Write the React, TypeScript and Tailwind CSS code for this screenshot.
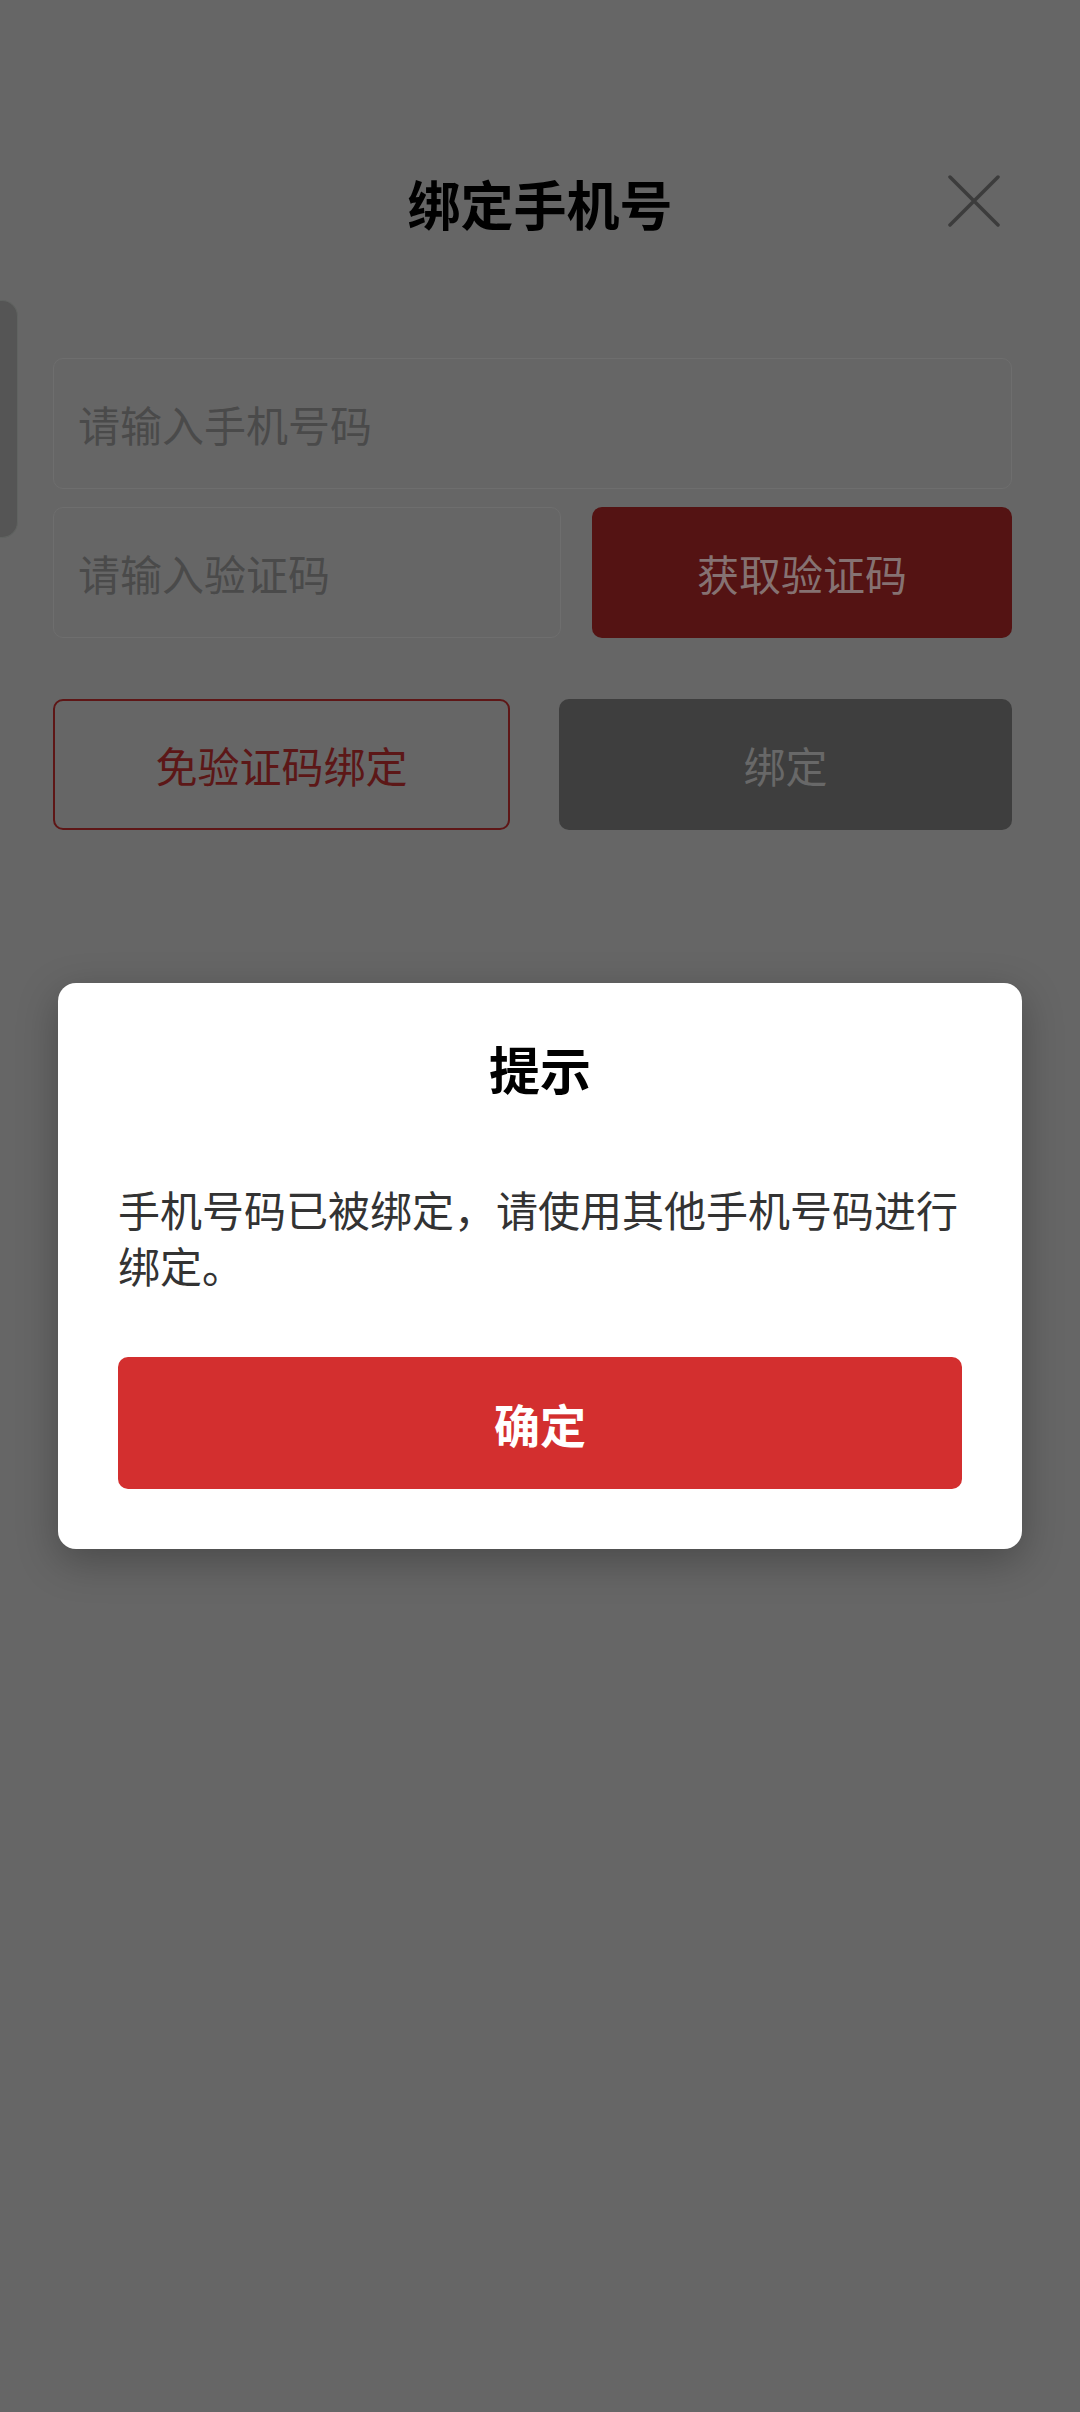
import React from "react";

const font = "font-['Noto_Sans_CJK_SC','Noto_Sans',sans-serif]";

function CloseIcon() {
  return (
    <svg viewBox="0 0 52 52" className="h-[52px] w-[52px]" fill="none">
      <path d="M2 2 L50 50 M50 2 L2 50" stroke="#3c3c3c" strokeWidth="3.5" strokeLinecap="round" />
    </svg>
  );
}

export default function App() {
  return (
    <div className={`relative min-h-[2412px] w-full overflow-hidden bg-[#666666] ${font}`}>
      {/* side tab peeking from the left edge */}
      <div className="absolute left-0 top-[300px] h-[238px] w-[18px] rounded-r-[16px] border border-l-0 border-[#606361] bg-[#555555]" />

      {/* header */}
      <div className="pt-[138px]">
        <div className="relative flex h-[130px] items-center justify-center">
          <h1 className="text-[53px] font-bold leading-none text-black">绑定手机号</h1>
          <button className="absolute right-[80px] top-[37px]">
            <CloseIcon />
          </button>
        </div>
      </div>

      {/* form */}
      <div className="mt-[90px] flex flex-col pl-[53px] pr-[68px]">
        <div className="flex h-[131px] items-center rounded-[10px] border border-[#6e6e6e] px-[24px] text-[42px] text-[#4a4a4a]">
          请输入手机号码
        </div>
        <div className="mt-[18px] flex gap-[31px]">
          <div className="flex h-[131px] flex-1 items-center rounded-[10px] border border-[#6e6e6e] px-[24px] text-[42px] text-[#4a4a4a]">
            请输入验证码
          </div>
          <div className="flex h-[131px] w-[420px] items-center justify-center rounded-[10px] bg-[#541313] text-[42px] text-[#857272]">
            获取验证码
          </div>
        </div>
        <div className="mt-[61px] flex gap-[49px]">
          <div className="flex h-[131px] flex-1 items-center justify-center rounded-[10px] border-2 border-[#5e1616] text-[42px] text-[#5c1717]">
            免验证码绑定
          </div>
          <div className="flex h-[131px] flex-1 items-center justify-center rounded-[10px] bg-[#3e3e3e] text-[42px] text-[#686868]">
            绑定
          </div>
        </div>
      </div>

      {/* dialog */}
      <div className="absolute inset-0 flex justify-center pt-[983px]">
        <div className="h-fit w-[964px] rounded-[18px] bg-white px-[60px] pb-[60px] pt-[50px] shadow-[0_12px_40px_rgba(0,0,0,0.28)]">
          <div className="text-center text-[51px] font-bold leading-[70px] text-black">提示</div>
          <p className="mt-[78px] text-[42px] leading-[56px] text-[#333333]">
            手机号码已被绑定，请使用其他手机号码进行绑定。
          </p>
          <button className="mt-[64px] flex h-[132px] w-full items-center justify-center rounded-[10px] bg-[#d32f2f] text-[46px] font-bold text-white">
            确定
          </button>
        </div>
      </div>
    </div>
  );
}
